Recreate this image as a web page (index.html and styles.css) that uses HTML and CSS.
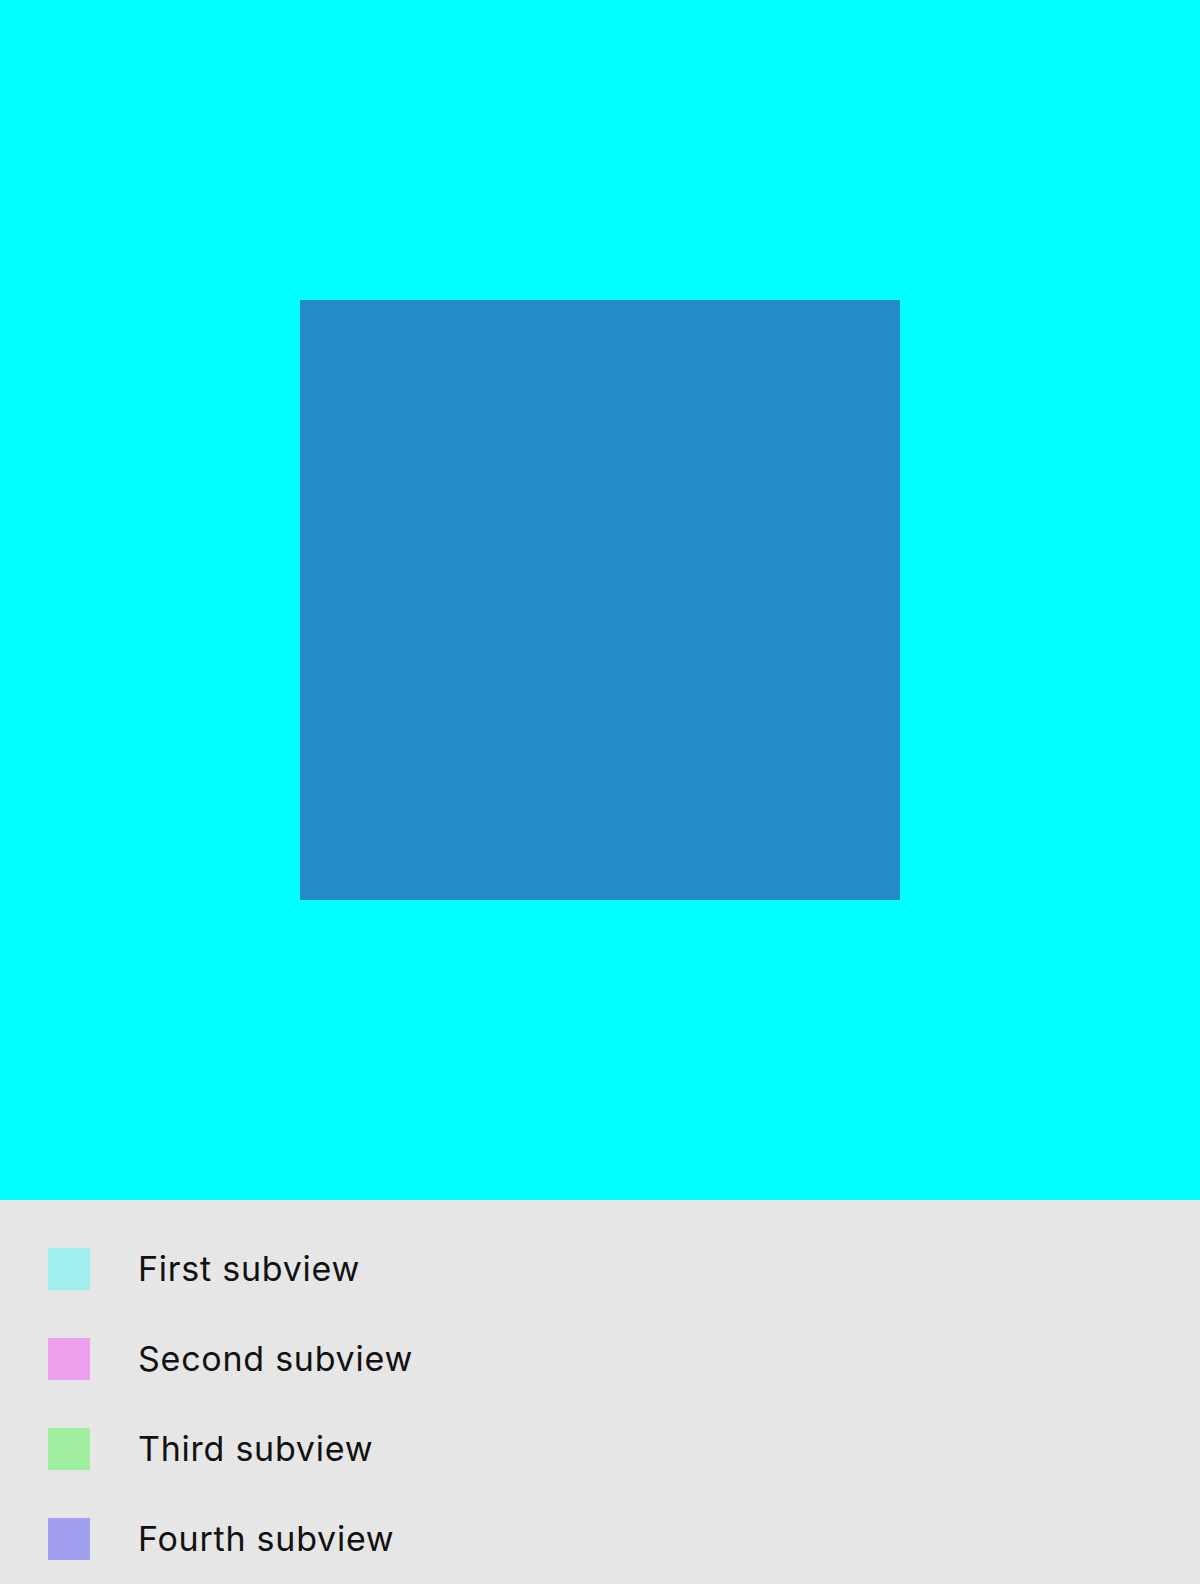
FILE: index.html
```html
<!DOCTYPE html>
<html>
<head>
<meta charset="utf-8">
<link rel="stylesheet" href="styles.css">
</head>
<body>
<div class="stage">
  <div class="square"></div>
</div>
<div class="legend">
  <div class="row"><span class="swatch sw1"></span><span class="label">First subview</span></div>
  <div class="row"><span class="swatch sw2"></span><span class="label">Second subview</span></div>
  <div class="row"><span class="swatch sw3"></span><span class="label">Third subview</span></div>
  <div class="row"><span class="swatch sw4"></span><span class="label">Fourth subview</span></div>
</div>
</body>
</html>
```
FILE: styles.css
```css
html, body {
  margin: 0;
  padding: 0;
}
body {
  width: 1200px;
  height: 1584px;
  overflow: hidden;
  background: #e6e6e6;
  font-family: Inter, "Noto Sans", sans-serif;
}
.stage {
  width: 1200px;
  height: 1200px;
  background: #00ffff;
  display: flex;
  align-items: center;
  justify-content: center;
}
.square {
  width: 600px;
  height: 600px;
  background: #248bc9;
}
.legend {
  padding: 24px 0 0 48px;
  display: flex;
  flex-direction: column;
}
.row {
  height: 90px;
  display: flex;
  align-items: center;
  gap: 48px;
}
.swatch {
  width: 42px;
  height: 42px;
  flex: none;
}
.sw1 { background: #a0eeee; }
.sw2 { background: #eea0ee; }
.sw3 { background: #a0eea0; }
.sw4 { background: #a0a0ee; }
.label {
  font-size: 34px;
  letter-spacing: 0.75px;
  color: #111;
  line-height: 1;
}
```
